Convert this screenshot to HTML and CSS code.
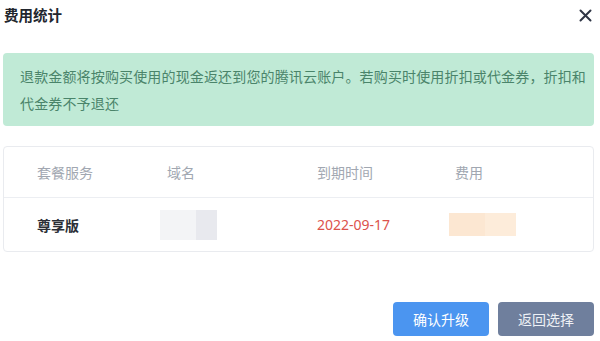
FILE: index.html
```html
<!DOCTYPE html>
<html lang="zh-CN">
<head>
<meta charset="utf-8">
<title>费用统计</title>
<link rel="stylesheet" href="styles.css">
</head>
<body>
<div class="dialog">
  <div class="header">
    <h1 class="title">费用统计</h1>
    <button class="close" aria-label="关闭">
      <svg width="13" height="13" viewBox="0 0 13 13"><path d="M1.5 1.5 L11.5 11.5 M11.5 1.5 L1.5 11.5" stroke="#2f3545" stroke-width="2" stroke-linecap="round" fill="none"/></svg>
    </button>
  </div>
  <div class="alert">退款金额将按购买使用的现金返还到您的腾讯云账户。若购买时使用折扣或代金券，折扣和代金券不予退还</div>
  <div class="table">
    <div class="row head">
      <div class="cell">套餐服务</div>
      <div class="cell">域名</div>
      <div class="cell">到期时间</div>
      <div class="cell">费用</div>
    </div>
    <div class="row body">
      <div class="cell plan">尊享版</div>
      <div class="cell"><span class="mask gray"><span class="mask-a"></span><span class="mask-b"></span></span></div>
      <div class="cell date">2022-09-17</div>
      <div class="cell"><span class="mask peach"><span class="mask-a"></span><span class="mask-b"></span></span></div>
    </div>
  </div>
  <div class="footer">
    <button class="btn primary">确认升级</button>
    <button class="btn secondary">返回选择</button>
  </div>
</div>
</body>
</html>
```

FILE: styles.css
```css
* { box-sizing: border-box; }
html, body {
  margin: 0;
  padding: 0;
  background: #ffffff;
}
body {
  font-family: "Noto Sans CJK SC", "Noto Sans", sans-serif;
  color: #333;
  width: 600px;
  height: 341px;
  overflow: hidden;
}
.dialog {
  padding: 0 6px 0 3px;
  display: flex;
  flex-direction: column;
}
.header {
  height: 53px;
  display: flex;
  justify-content: space-between;
  align-items: flex-start;
}
.title {
  margin: 0;
  padding: 0 0 0 1px;
  font-size: 14.5px;
  font-weight: 700;
  line-height: 30px;
  color: #22262e;
}
.close {
  border: 0;
  background: none;
  padding: 0;
  margin: 9px 2px 0 0;
  width: 13px;
  height: 13px;
  display: flex;
}
.alert {
  height: 73px;
  background: #c0ead6;
  border-radius: 4px;
  padding: 10px 0 0 17px;
  font-size: 14px;
  line-height: 27px;
  letter-spacing: 0.15px;
  color: #4a846a;
}
.table {
  margin-top: 20px;
  border: 1px solid #e9ebef;
  border-radius: 4px;
  height: 106px;
}
.row {
  display: grid;
  grid-template-columns: 130px 150px 138px 1fr;
  padding-left: 33px;
  align-items: center;
  font-size: 14px;
}
.row.head {
  height: 51px;
  color: #a1a7b1;
  border-bottom: 1px solid #eceef2;
}
.row.body {
  height: 53px;
}
.plan {
  font-weight: 700;
  color: #2b2f36;
}
.date {
  color: #dc524c;
  font-family: "Noto Sans", sans-serif;
}
.mask {
  display: flex;
}
.mask.gray {
  margin-left: -7px;
  height: 30px;
}
.mask.gray .mask-a { width: 36px; background: #f3f4f6; }
.mask.gray .mask-b { width: 21px; background: #e8e9ee; }
.mask.peach {
  margin-left: -6px;
  height: 23px;
}
.mask.peach .mask-a { width: 36px; background: #fce7d2; }
.mask.peach .mask-b { width: 31px; background: #fdecda; }
.footer {
  margin-top: 50px;
  display: flex;
  justify-content: flex-end;
  gap: 9px;
}
.btn {
  width: 96px;
  height: 34px;
  border: 0;
  border-radius: 4px;
  font-family: "Noto Sans CJK SC", sans-serif;
  font-size: 14px;
  color: #fff;
  padding: 0;
}
.btn.primary { background: #4b95f0; }
.btn.secondary { background: #6f7f9d; color: #eef1f6; }
```
